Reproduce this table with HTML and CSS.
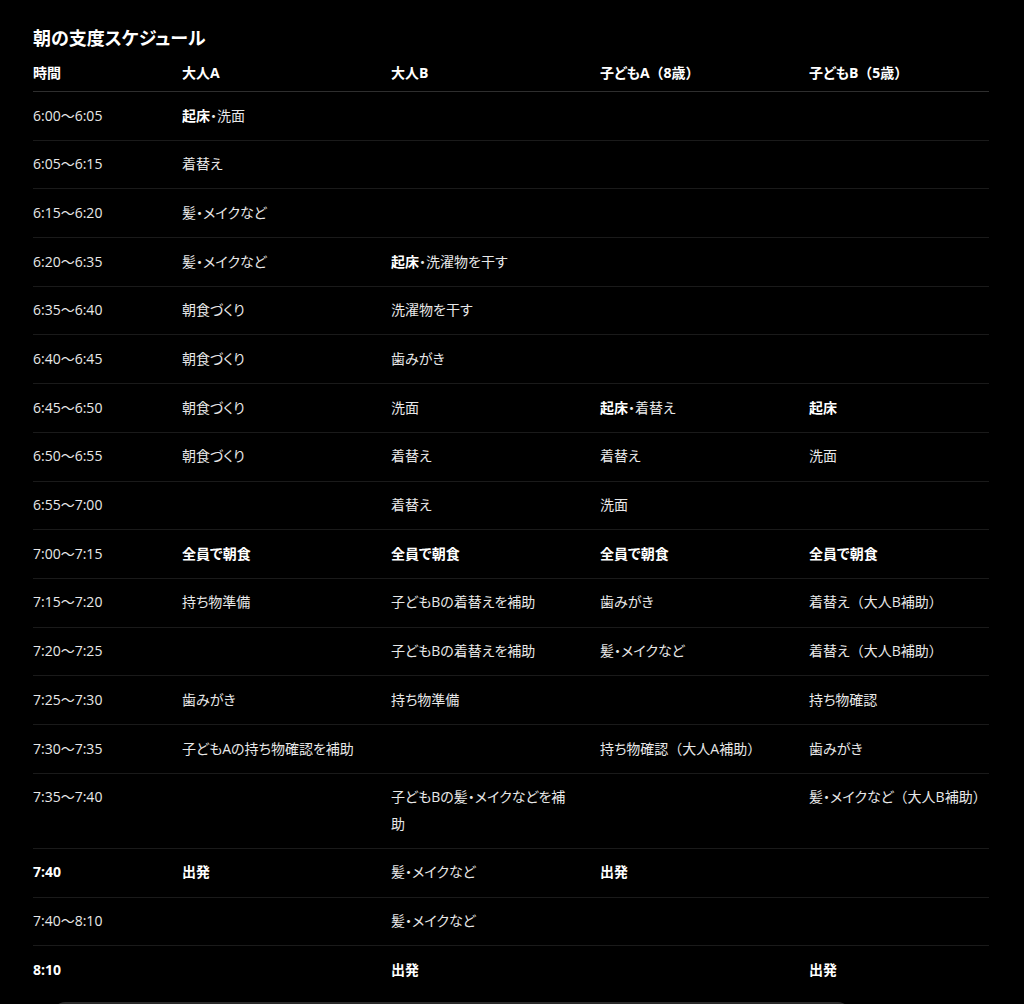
FILE: index.html
```html
<!DOCTYPE html>
<html lang="ja">
<head>
<meta charset="utf-8">
<title>朝の支度スケジュール</title>
<link rel="stylesheet" href="styles.css">
</head>
<body>
<main class="page">
  <h2 class="title">朝の支度スケジュール</h2>
  <table class="schedule">
    <colgroup>
      <col class="c-time"><col class="c-mid"><col class="c-mid"><col class="c-mid"><col class="c-last">
    </colgroup>
    <thead>
      <tr><th>時間</th><th>大人A</th><th>大人B</th><th>子どもA<span class="fw">（8歳）</span></th><th>子どもB<span class="fw">（5歳）</span></th></tr>
    </thead>
    <tbody>
      <tr><td>6:00〜6:05</td><td><b>起床</b>・洗面</td><td></td><td></td><td></td></tr>
      <tr><td>6:05〜6:15</td><td>着替え</td><td></td><td></td><td></td></tr>
      <tr><td>6:15〜6:20</td><td>髪・メイクなど</td><td></td><td></td><td></td></tr>
      <tr><td>6:20〜6:35</td><td>髪・メイクなど</td><td><b>起床</b>・洗濯物を干す</td><td></td><td></td></tr>
      <tr><td>6:35〜6:40</td><td>朝食づくり</td><td>洗濯物を干す</td><td></td><td></td></tr>
      <tr><td>6:40〜6:45</td><td>朝食づくり</td><td>歯みがき</td><td></td><td></td></tr>
      <tr><td>6:45〜6:50</td><td>朝食づくり</td><td>洗面</td><td><b>起床</b>・着替え</td><td><b>起床</b></td></tr>
      <tr><td>6:50〜6:55</td><td>朝食づくり</td><td>着替え</td><td>着替え</td><td>洗面</td></tr>
      <tr><td>6:55〜7:00</td><td></td><td>着替え</td><td>洗面</td><td></td></tr>
      <tr><td>7:00〜7:15</td><td><b>全員で朝食</b></td><td><b>全員で朝食</b></td><td><b>全員で朝食</b></td><td><b>全員で朝食</b></td></tr>
      <tr><td>7:15〜7:20</td><td>持ち物準備</td><td>子どもBの着替えを補助</td><td>歯みがき</td><td>着替え<span class="fw">（大人B補助）</span></td></tr>
      <tr><td>7:20〜7:25</td><td></td><td>子どもBの着替えを補助</td><td>髪・メイクなど</td><td>着替え<span class="fw">（大人B補助）</span></td></tr>
      <tr><td>7:25〜7:30</td><td>歯みがき</td><td>持ち物準備</td><td></td><td>持ち物確認</td></tr>
      <tr><td>7:30〜7:35</td><td>子どもAの持ち物確認を補助</td><td></td><td>持ち物確認<span class="fw">（大人A補助）</span></td><td>歯みがき</td></tr>
      <tr><td>7:35〜7:40</td><td></td><td>子どもBの髪・メイクなどを補助</td><td></td><td>髪・メイクなど<span class="fw">（大人B補助）</span></td></tr>
      <tr><td><b>7:40</b></td><td><b>出発</b></td><td>髪・メイクなど</td><td><b>出発</b></td><td></td></tr>
      <tr><td>7:40〜8:10</td><td></td><td>髪・メイクなど</td><td></td><td></td></tr>
      <tr><td><b>8:10</b></td><td></td><td><b>出発</b></td><td></td><td><b>出発</b></td></tr>
    </tbody>
  </table>
  <div class="composer"></div>
</main>
</body>
</html>
```
FILE: styles.css
```css
html, body {
  margin: 0;
  padding: 0;
  background: #000;
}
body {
  color: #e8e8e8;
  font-family: "Open Sans", "Noto Sans CJK JP", sans-serif;
  font-size: 14px;
  font-feature-settings: "palt";
}
.page {
  padding: 24px 0 0 33px;
  width: 956px;
}
.title {
  margin: 0 0 8px 0;
  font-size: 18px;
  font-weight: 700;
  line-height: 28px;
  color: #fff;
}
.schedule {
  border-collapse: collapse;
  table-layout: fixed;
  width: 956px;
}
.c-time { width: 149px; }
.c-mid { width: 209px; }
.c-last { width: 180px; }
.schedule th {
  text-align: left;
  font-weight: 700;
  color: #fff;
  padding: 0 0 5px 0;
  line-height: 26px;
  border-bottom: 1px solid #2e2e2e;
}
.schedule td {
  padding: 10.6px 12px 10.6px 0;
  line-height: 26.5px;
  vertical-align: top;
  border-bottom: 1px solid #1a1a1a;
}
.schedule td:nth-child(3) { padding-right: 30px; }
.schedule td:last-child { padding-right: 0; }
.schedule tbody tr:last-child td { border-bottom: none; }
.schedule b {
  font-weight: 700;
  color: #fff;
}
.fw {
  font-feature-settings: normal;
}
.composer {
  margin: 8px 0 0 20px;
  width: 797px;
  height: 40px;
  border-radius: 12px;
  background: #2a2a2a;
}
```
